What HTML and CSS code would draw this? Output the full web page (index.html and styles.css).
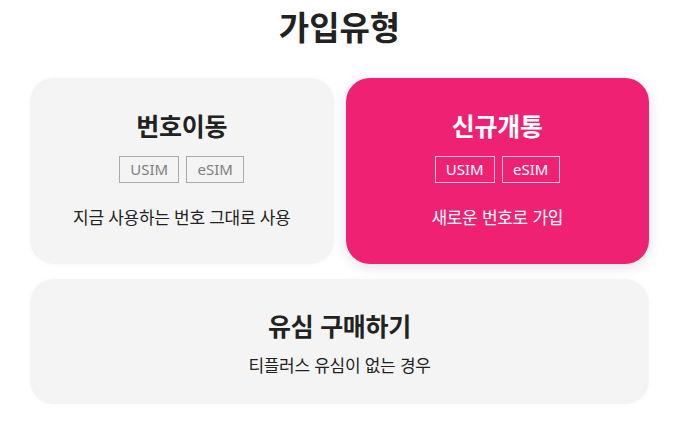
FILE: index.html
```html
<!DOCTYPE html>
<html lang="ko">

<head>
  <meta charset="utf-8">
  <title>가입유형</title>
  <link rel="stylesheet" href="styles.css">
</head>

<body>

  <div class="join-type">
    <h1 class="join-title">가입유형</h1>

    <!-- 번호이동 / 신규개통 -->
    <div class="card-row">
      <div class="type-card">
        <h2 class="card-title">번호이동</h2>
        <div class="sim-tags">
          <span class="sim-tag">USIM</span>
          <span class="sim-tag">eSIM</span>
        </div>
        <p class="card-desc">지금 사용하는 번호 그대로 사용</p>
      </div>

      <div class="type-card active">
        <h2 class="card-title">신규개통</h2>
        <div class="sim-tags">
          <span class="sim-tag">USIM</span>
          <span class="sim-tag">eSIM</span>
        </div>
        <p class="card-desc">새로운 번호로 가입</p>
      </div>
    </div>

    <!-- 유심 구매 -->
    <div class="type-card wide">
      <h2 class="card-title">유심 구매하기</h2>
      <p class="card-desc">티플러스 유심이 없는 경우</p>
    </div>
  </div>

</body>

</html>
```

FILE: styles.css
```css
body {
  margin: 0;
  padding: 0;
  font-family: 'Noto Sans CJK KR', 'Noto Sans', sans-serif;
  background-color: #ffffff;
  color: #222;
}

.join-type {
  width: 619px;
  margin-left: 30px;
  padding-top: 4px;
}

.join-title {
  margin: 0 0 30px;
  text-align: center;
  font-size: 33px;
  line-height: 44px;
  font-weight: 700;
  color: #222;
}

.card-row {
  display: flex;
  gap: 12px;
  margin-bottom: 15px;
}

.type-card {
  flex: 1;
  display: flex;
  flex-direction: column;
  align-items: center;
  background-color: #f4f4f4;
  border-radius: 24px;
  padding: 29px 0 0;
  height: 186px;
  box-sizing: border-box;
  box-shadow: 0 0 6px rgba(0, 0, 0, 0.03);
}

.type-card.active {
  background-color: #ee2173;
  color: #fff;
  box-shadow: 0 3px 14px rgba(0, 0, 0, 0.12);
}

.type-card.wide {
  height: 125px;
  padding-top: 28px;
}

.card-title {
  margin: 0;
  font-size: 25px;
  line-height: 36px;
  font-weight: 700;
  letter-spacing: -0.3px;
}

.sim-tags {
  display: flex;
  gap: 7px;
  margin-top: 13px;
}

.sim-tag {
  display: inline-block;
  width: 60px;
  height: 27px;
  box-sizing: border-box;
  border: 1px solid #aaa;
  color: #808080;
  font-family: 'Noto Sans', sans-serif;
  font-size: 15px;
  line-height: 25px;
  text-align: center;
}

.sim-tag + .sim-tag {
  width: 58px;
}

.active .sim-tag {
  border-color: #fbc9dc;
  color: #fff;
}

.card-desc {
  margin: 22px 0 0;
  font-size: 17px;
  line-height: 24px;
  letter-spacing: -0.3px;
}

.wide .card-desc {
  margin-top: 10px;
}
```
